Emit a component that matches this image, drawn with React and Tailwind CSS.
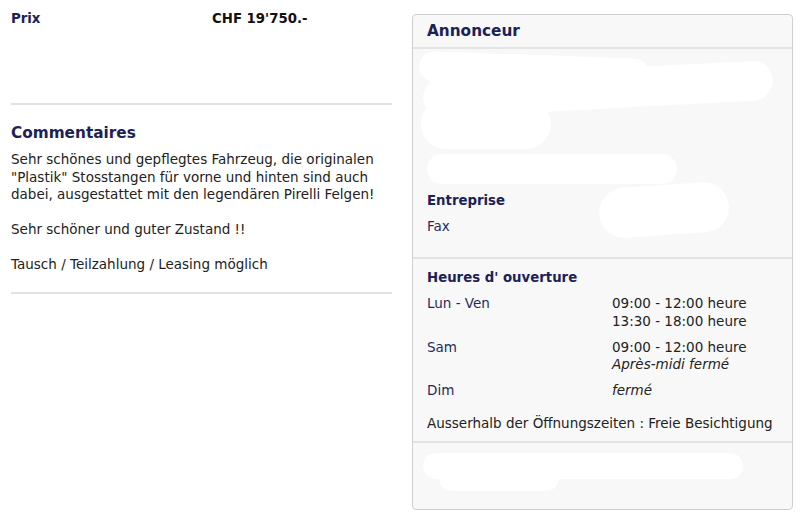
import React from "react";

const F = { fontFamily: '"DejaVu Sans", Verdana, sans-serif' };

function Blob({ className }) {
  return <div className={"absolute bg-white rounded-full " + className} />;
}

export default function App() {
  return (
    <div className="w-[800px] h-[518px] bg-white relative overflow-hidden text-[13.5px] text-[#333]" style={F}>
      <div className="flex items-start pl-[11px] pt-[14px] gap-[20px]">
        {/* Left column */}
        <div className="w-[381px] flex flex-col -mt-[4px]">
          <div className="flex leading-[17px] text-[13.3px]">
            <div className="w-[201px] font-bold text-[#1b2255]">Prix</div>
            <div className="font-bold text-[#111]">CHF 19'750.-</div>
          </div>
          <div className="h-[2px] bg-[#e2e2e2] mt-[76px]" />
          <h2 className="text-[15.3px] font-bold text-[#1b2255] mt-[18px] leading-[20px]">Commentaires</h2>
          <div className="mt-[8px] leading-[17.5px] text-[#222]">
            Sehr schönes und gepflegtes Fahrzeug, die originalen<br />
            "Plastik" Stosstangen für vorne und hinten sind auch<br />
            dabei, ausgestattet mit den legendären Pirelli Felgen!<br />
            <br />
            Sehr schöner und guter Zustand !!<br />
            <br />
            Tausch / Teilzahlung / Leasing möglich
          </div>
          <div className="h-[2px] bg-[#e2e2e2] mt-[18px]" />
        </div>

        {/* Right panel */}
        <div className="w-[381px] h-[496px] border border-[#cfcfcf] rounded-[4px] bg-[#f8f8f8] flex flex-col relative">
          <div className="h-[34px] border-b-2 border-[#e4e4e4] flex items-center px-[14px]">
            <span className="text-[15.3px] font-bold text-[#1b2255]">Annonceur</span>
          </div>
          <div className="relative h-[140px]">
            <Blob className="left-[6px] top-[6px] w-[230px] h-[30px] rotate-[2deg]" />
            <Blob className="left-[10px] top-[20px] w-[350px] h-[40px] rotate-[-3deg]" />
            <Blob className="left-[8px] top-[50px] w-[130px] h-[50px] rounded-[14px]" />
            <Blob className="left-[14px] top-[105px] w-[250px] h-[30px]" />
          </div>
          <div className="px-[14px] pt-[3px] relative">
            <div className="font-bold text-[#1b2255] leading-[17px] text-[13.3px]">Entreprise</div>
            <div className="text-[#1e2d5c] mt-[9px] leading-[17px]">Fax</div>
            <Blob className="left-[186px] top-[-4px] w-[130px] h-[50px] rotate-[-4deg]" />
          </div>
          <div className="h-[2px] bg-[#e4e4e4] mt-[22px]" />
          <div className="px-[14px] pt-[10px]">
            <div className="font-bold text-[#1b2255] leading-[17px] text-[13.3px]">Heures d' ouverture</div>
            <div className="grid grid-cols-[185px_1fr] mt-[9px] leading-[17.5px] text-[#222] gap-y-[8.5px]">
              <div className="text-[#1e2d5c]">Lun - Ven</div>
              <div>09:00 - 12:00 heure<br />13:30 - 18:00 heure</div>
              <div className="text-[#1e2d5c]">Sam</div>
              <div>09:00 - 12:00 heure<br /><i>Après-midi fermé</i></div>
              <div className="text-[#1e2d5c]">Dim</div>
              <div><i>fermé</i></div>
            </div>
            <div className="mt-[15px] leading-[17px] text-[#222]">Ausserhalb der Öffnungszeiten : Freie Besichtigung</div>
          </div>
          <div className="h-[2px] bg-[#e4e4e4] mt-[9px]" />
          <div className="relative flex-1">
            <Blob className="left-[10px] top-[10px] w-[320px] h-[26px]" />
            <Blob className="left-[26px] top-[22px] w-[120px] h-[26px]" />
          </div>
        </div>
      </div>
    </div>
  );
}
